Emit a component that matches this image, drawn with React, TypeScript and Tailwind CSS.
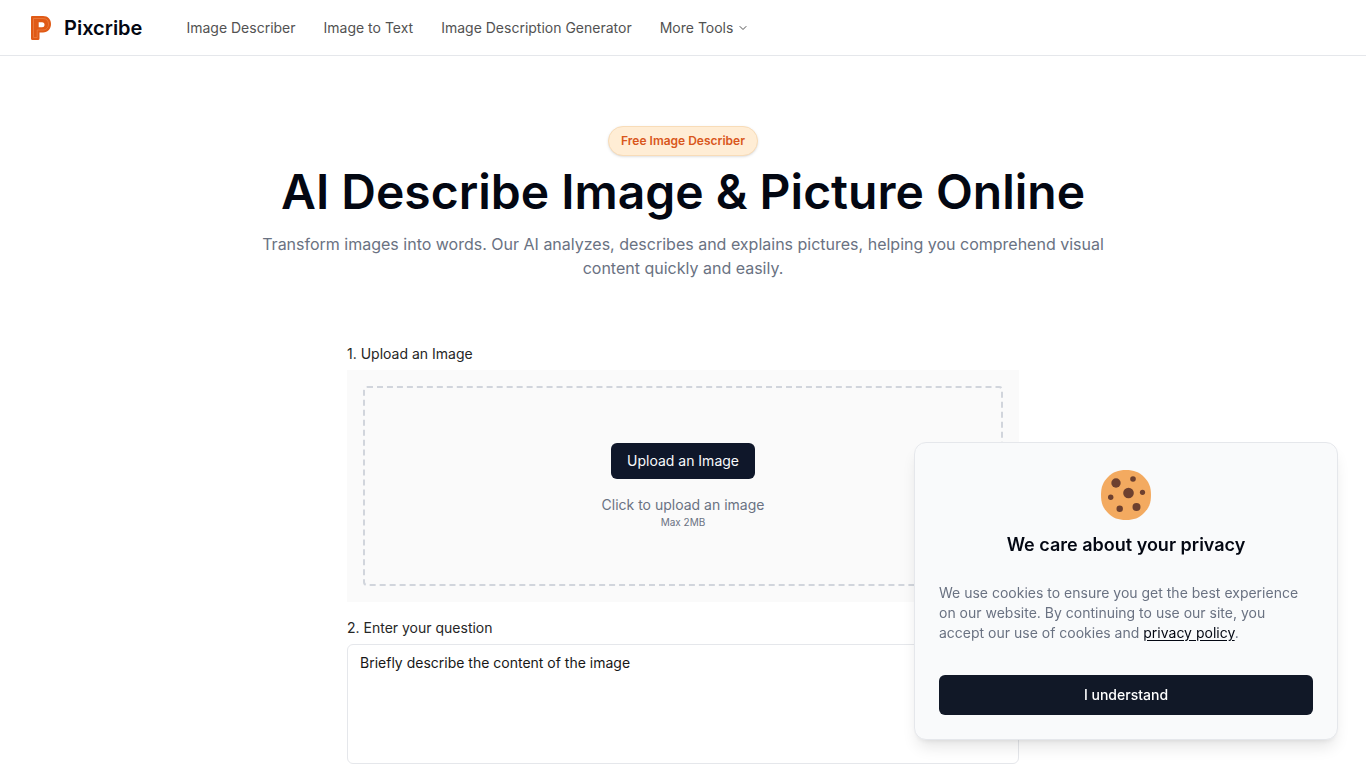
import { useState } from "react";
import { ChevronDown } from "lucide-react";

const links = ["Image Describer", "Image to Text", "Image Description Generator"];

const Logo = () => (
  <svg viewBox="0 0 20 24" className="w-5 h-6" aria-hidden="true">
    <path
      fillRule="evenodd"
      d="M1 0h11c5 0 8 3.300 8 8s-3 8.500-8 8.500H8.500v6a1.500 1.500 0 0 1-1.500 1.500H1.500A1.500 1.500 0 0 1 0 22.500V1a1 1 0 0 1 1-1zm6.700 6.200v5H11a2.500 2.500 0 0 0 0-5z"
      fill="#e05a16"
    />
    <path
      d="M2.500 2.500H12c3.600 0 5.500 2.300 5.500 5.500s-1.900 6-5.500 6H6.200v7.500H2.500z"
      fill="none"
      stroke="#ee8a50"
      strokeWidth=".6"
    />
  </svg>
);

const Cookie = () => (
  <svg viewBox="0 0 50 50" className="size-[50px]" aria-hidden="true">
    <path
      d="M25 0c8 0 13 2 18 7s7 10 7 18-2 13-7 18-10 7-18 7-13-2-18-7-7-10-7-18 2-13 7-18S17 0 25 0z"
      fill="#f3aa60"
    />
    <g fill="#6d402f">
      <circle cx="15" cy="13" r="4.700" />
      <circle cx="32" cy="9" r="2.800" />
      <circle cx="27.500" cy="23" r="5.300" />
      <circle cx="41.500" cy="22.300" r="2.600" />
      <circle cx="9.700" cy="27.300" r="2.700" />
      <circle cx="18.700" cy="38.700" r="3.200" />
      <circle cx="35.500" cy="37" r="4" />
    </g>
  </svg>
);

const Header = () => (
  <header className="h-14 border-b border-gray-200 flex items-center px-7">
    <a href="#" className="flex items-center gap-[13px] pl-[3px]">
      <Logo />
      <span className="text-xl font-semibold text-gray-950">Pixcribe</span>
    </a>
    <nav className="flex items-center gap-7 ml-11 text-sm text-neutral-600">
      {links.map((link) => (
        <a key={link} href="#">
          {link}
        </a>
      ))}
      <button type="button" className="flex items-center gap-1">
        More Tools
        <ChevronDown className="size-3" />
      </button>
    </nav>
  </header>
);

const Hero = () => (
  <section className="flex flex-col items-center px-4 pt-[70px] text-center">
    <span className="rounded-full border border-[#f8dcb8] bg-[#ffedd5] px-3 py-[6px] text-xs font-semibold text-[#d9571c] shadow-sm">
      Free Image Describer
    </span>
    <h1 className="mt-3 text-5xl leading-[48px] font-semibold text-[#030712]">
      AI Describe Image &amp; Picture Online
    </h1>
    <p className="mt-4 max-w-4xl text-base text-gray-500">
      Transform images into words. Our AI analyzes, describes and explains pictures, helping you comprehend visual
      content quickly and easily.
    </p>
  </section>
);

const Describer = () => {
  const [question, setQuestion] = useState("Briefly describe the content of the image");

  return (
    <section className="mx-auto mt-16 max-w-2xl text-sm text-neutral-800">
      <h2>1. Upload an Image</h2>
      <div className="mt-[6px] bg-[#fafafa] p-4">
        <div className="flex h-[200px] flex-col items-center justify-center rounded-sm border-2 border-dashed border-gray-300">
          <button type="button" className="h-9 rounded-md bg-[#0f172a] px-4 text-slate-50">
            Upload an Image
          </button>
          <p className="mt-4 text-gray-500">Click to upload an image</p>
          <p className="text-[10px] leading-[15px] text-gray-500">Max 2MB</p>
        </div>
      </div>
      <label htmlFor="question" className="mt-4 block">
        2. Enter your question
      </label>
      <textarea
        id="question"
        value={question}
        onChange={(e) => setQuestion(e.target.value)}
        className="mt-[6px] block h-[120px] w-full resize-none rounded-md border border-gray-200 px-3 py-2 text-neutral-900"
      />
    </section>
  );
};

const CookieNotice = ({ onAccept }: { onAccept: () => void }) => (
  <aside className="fixed right-7 bottom-7 flex w-[424px] flex-col items-center rounded-xl border border-gray-200 bg-[#f9fafb] px-6 pt-[27px] pb-6 shadow-lg">
    <Cookie />
    <h2 className="mt-[11px] text-lg font-semibold text-gray-950">We care about your privacy</h2>
    <p className="mt-6 text-sm text-gray-500">
      We use cookies to ensure you get the best experience on our website. By continuing to use our site, you accept our
      use of cookies and{" "}
      <a href="#" className="text-gray-950 underline underline-offset-2">
        privacy policy
      </a>
      .
    </p>
    <button
      type="button"
      onClick={onAccept}
      className="mt-8 h-10 w-full rounded-md bg-[#111827] text-sm font-medium text-white"
    >
      I understand
    </button>
  </aside>
);

const App = () => {
  const [accepted, setAccepted] = useState(false);

  return (
    <div className="h-screen overflow-hidden bg-white font-['Inter',sans-serif]">
      <Header />
      <main>
        <Hero />
        <Describer />
      </main>
      {!accepted && <CookieNotice onAccept={() => setAccepted(true)} />}
    </div>
  );
};

export default App;
